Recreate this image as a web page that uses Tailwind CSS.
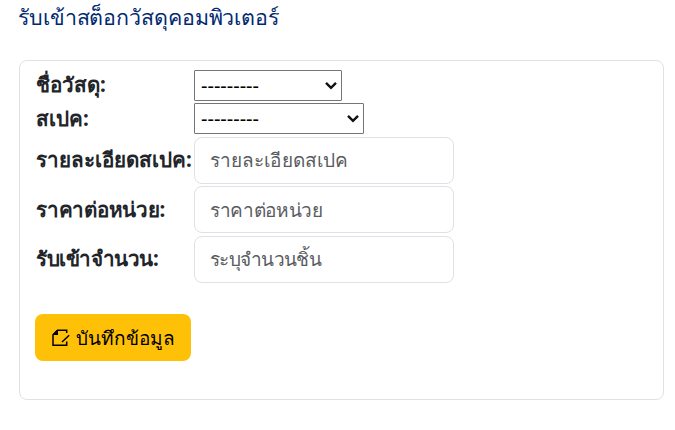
<!DOCTYPE html>
<html lang="th">
<head>
<meta charset="utf-8">
<title>รับเข้าสต็อกวัสดุคอมพิวเตอร์</title>
<script src="https://cdn.jsdelivr.net/npm/@tailwindcss/browser@4"></script>
</head>
<body class="bg-white font-['Noto_Sans',sans-serif] text-[#212529] h-[430px] overflow-hidden pl-[19px] pr-[11px] pt-[2px]">
<h1 class="-ml-px text-[21.4px] leading-[30px] tracking-[-0.1px] text-[#012970] whitespace-nowrap">รับเข้าสต็อกวัสดุคอมพิวเตอร์</h1>
<form class="mt-7 h-[340px] rounded-lg border border-[#dee2e6] pl-[15px] pt-[9px]">
  <div class="grid grid-cols-[159px_260px] grid-rows-[33px_34px_49px_50px_47px] text-[20px] items-start">
    <label class="pl-px font-bold text-[20.6px] leading-[29px] whitespace-nowrap">ชื่อวัสดุ:</label>
    <div class="relative w-[148px] h-[31px] rounded-[1px] border border-[#767676] pl-[6px] text-black leading-[30px]">---------
      <svg class="absolute right-[4px] top-[10px] w-3 h-[9px]" viewBox="0 0 12 9" fill="none" stroke="#111" stroke-width="2.4"><path d="M1 1.8 6 6.8 11 1.8"/></svg>
    </div>
    <label class="pl-px font-bold text-[20.6px] leading-[31px] whitespace-nowrap">สเปค:</label>
    <div class="relative w-[170px] h-[31px] rounded-[1px] border border-[#767676] pl-[6px] text-black leading-[30px]">---------
      <svg class="absolute right-[4px] top-[10px] w-3 h-[9px]" viewBox="0 0 12 9" fill="none" stroke="#111" stroke-width="2.4"><path d="M1 1.8 6 6.8 11 1.8"/></svg>
    </div>
    <label class="pl-px font-bold text-[20.6px] leading-[45px] whitespace-nowrap">รายละเอียดสเปค:</label>
    <input class="h-[47px] w-[260px] rounded-lg border border-[#dee2e6] px-[15px] pb-[2px] text-[19px] tracking-[0.08px] placeholder:text-[#595c5f]" placeholder="รายละเอียดสเปค">
    <label class="pl-px font-bold text-[20.6px] leading-[47px] tracking-[-0.25px] whitespace-nowrap">ราคาต่อหน่วย:</label>
    <input class="h-[47px] w-[260px] rounded-lg border border-[#dee2e6] px-[15px] text-[19px] tracking-[-0.35px] placeholder:text-[#595c5f]" placeholder="ราคาต่อหน่วย">
    <label class="pl-px font-bold text-[20.6px] leading-[45px] tracking-[-0.45px] whitespace-nowrap">รับเข้าจำนวน:</label>
    <input class="h-[47px] w-[260px] rounded-lg border border-[#dee2e6] px-[15px] pb-[2px] text-[19px] tracking-[-0.65px] placeholder:text-[#595c5f]" placeholder="ระบุจำนวนชิ้น">
  </div>
  <button type="button" class="mt-[31px] flex h-[47px] w-[156px] items-center rounded-lg bg-[#ffc107] pl-[17px] text-[19px] text-black whitespace-nowrap">
    <svg class="mr-[6px] h-[18px] w-[18px] shrink-0" viewBox="0 0 18 18" fill="none" stroke="#000" stroke-width="1.5"><path d="M14.7 4V1.2H5.5L1 5.7V16.3H14.7V12.5"/><path d="M1 6V5L5 1H6V6Z" fill="#000" stroke="none"/><path d="M17.2 6.3 10 13"/></svg>
    <span class="pt-px">บันทึกข้อมูล</span>
  </button>
</form>
</body>
</html>
